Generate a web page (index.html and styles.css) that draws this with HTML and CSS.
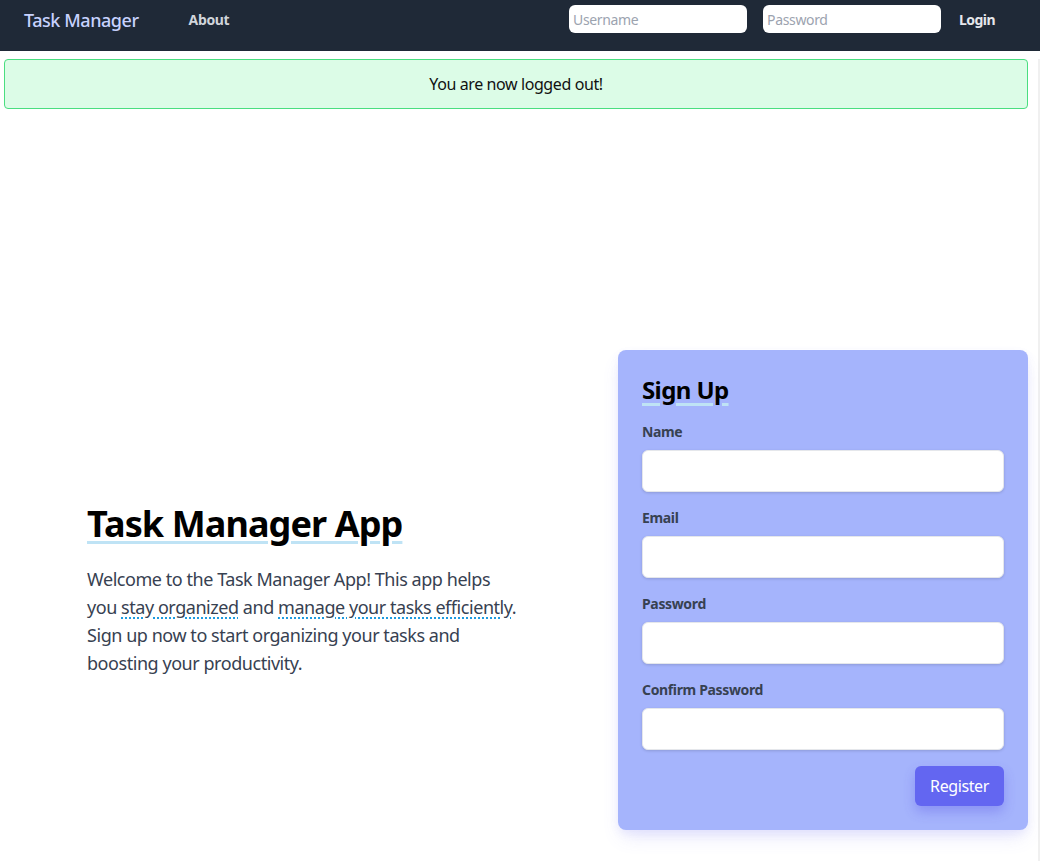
FILE: index.html
```html
<!DOCTYPE html>
<html lang="en">
<head>
<meta charset="utf-8">
<title>Task Manager</title>
<link rel="stylesheet" href="styles.css">
</head>
<body>
<nav class="navbar">
  <a class="brand" href="#">Task Manager</a>
  <a class="nav-link" href="#">About</a>
  <form class="login-form">
    <input class="nav-input" type="text" placeholder="Username">
    <input class="nav-input" type="password" placeholder="Password">
    <button class="login-btn" type="button">Login</button>
  </form>
</nav>
<div class="page">
  <div class="alert">You are now logged out!</div>
  <main class="hero">
    <section class="intro">
      <h1 class="intro-title"><span class="mark">Task Manager App</span></h1>
      <p class="intro-text">Welcome to the Task Manager App! This app helps you <span class="grammar">stay organized</span> and <span class="grammar">manage your tasks efficiently</span>. Sign up now to start organizing your tasks and boosting your productivity.</p>
    </section>
    <section class="card">
      <h2 class="card-title"><span class="mark">Sign Up</span></h2>
      <form class="signup">
        <label class="field-label">Name</label>
        <input class="field-input" type="text">
        <label class="field-label">Email</label>
        <input class="field-input" type="email">
        <label class="field-label">Password</label>
        <input class="field-input" type="password">
        <label class="field-label">Confirm Password</label>
        <input class="field-input" type="password">
        <div class="actions">
          <button class="register-btn" type="button">Register</button>
        </div>
      </form>
    </section>
  </main>
</div>
</body>
</html>
```

FILE: styles.css
```css
* { box-sizing: border-box; letter-spacing: -0.025em; }
html, body { margin: 0; padding: 0; }
body {
  font-family: "Noto Sans", "Open Sans", sans-serif;
  background: #ffffff;
  color: #111827;
  height: 861px;
  overflow: hidden;
}
.navbar {
  height: 51px;
  background: #1f2937;
  display: flex;
  align-items: center;
  padding: 0 24px;
}
.brand {
  color: #c7d2fe;
  font-size: 18px;
  font-weight: 500;
  text-decoration: none;
  margin-top: -11px;
}
.nav-link {
  color: #d1d5db;
  font-size: 14px;
  font-weight: 700;
  text-decoration: none;
  margin-left: 50px;
  margin-top: -12px;
}
.login-form {
  margin-left: auto;
  display: flex;
  align-items: center;
  gap: 16px;
  margin-top: -13px;
  margin-right: 21px;
}
.nav-input {
  width: 178px;
  height: 28px;
  border: none;
  border-radius: 6px;
  padding: 0 4px;
  font-family: inherit;
  font-size: 14px;
  background: #fff;
}
.nav-input::placeholder { color: #9ca3af; }
.login-btn {
  background: none;
  border: none;
  color: #e5e7eb;
  font-family: inherit;
  font-size: 14px;
  font-weight: 700;
  padding: 0;
  margin-left: 2px;
  letter-spacing: -0.04em;
}
.page {
  border-right: 2px solid #f0f0f0;
  height: 810px;
}
.alert {
  margin: 8px 10px 0 4px;
  height: 50px;
  background: #dcfce7;
  border: 1px solid #4ade80;
  border-radius: 4px;
  display: flex;
  align-items: center;
  justify-content: center;
  font-size: 16px;
  color: #111;
}
.hero {
  display: flex;
  align-items: center;
  justify-content: space-between;
  padding: 241px 10px 0 87px;
}
.intro { width: 434px; }
.intro-title {
  margin: 0 0 21px;
  font-size: 36px;
  line-height: 40px;
  font-weight: 700;
  color: #000;
}
.mark {
  text-decoration: underline solid #bfe3f5;
  text-decoration-thickness: 3px;
  text-underline-offset: 4px;
}
.intro-text {
  margin: 0;
  font-size: 18px;
  line-height: 28px;
  color: #374151;
}
.grammar {
  text-decoration: underline dotted #1e9be0;
  text-decoration-thickness: 2px;
  text-underline-offset: 4px;
}
.card {
  width: 410px;
  background: #a5b4fc;
  border-radius: 8px;
  padding: 24px;
  box-shadow: 0 10px 20px -5px rgba(99, 102, 241, 0.18), 0 4px 8px rgba(99, 102, 241, 0.08);
}
.card-title {
  margin: 0 0 16px;
  font-size: 24px;
  line-height: 32px;
  font-weight: 700;
  color: #000;
}
.signup { display: flex; flex-direction: column; }
.field-label {
  font-size: 14px;
  line-height: 20px;
  font-weight: 700;
  color: #374151;
  margin-bottom: 8px;
}
.field-input {
  height: 42px;
  border: 1px solid #e5e7eb;
  border-radius: 6px;
  background: #fff;
  box-shadow: 0 1px 3px rgba(0,0,0,0.15);
  margin-bottom: 16px;
  font-family: inherit;
  font-size: 16px;
  padding: 0 12px;
}
.actions { display: flex; justify-content: flex-end; }
.register-btn {
  width: 89px;
  height: 40px;
  border: none;
  border-radius: 6px;
  background: #6366f1;
  color: #fff;
  font-family: inherit;
  font-size: 16px;
  box-shadow: 0 6px 12px rgba(79, 70, 229, 0.3);
}
```
